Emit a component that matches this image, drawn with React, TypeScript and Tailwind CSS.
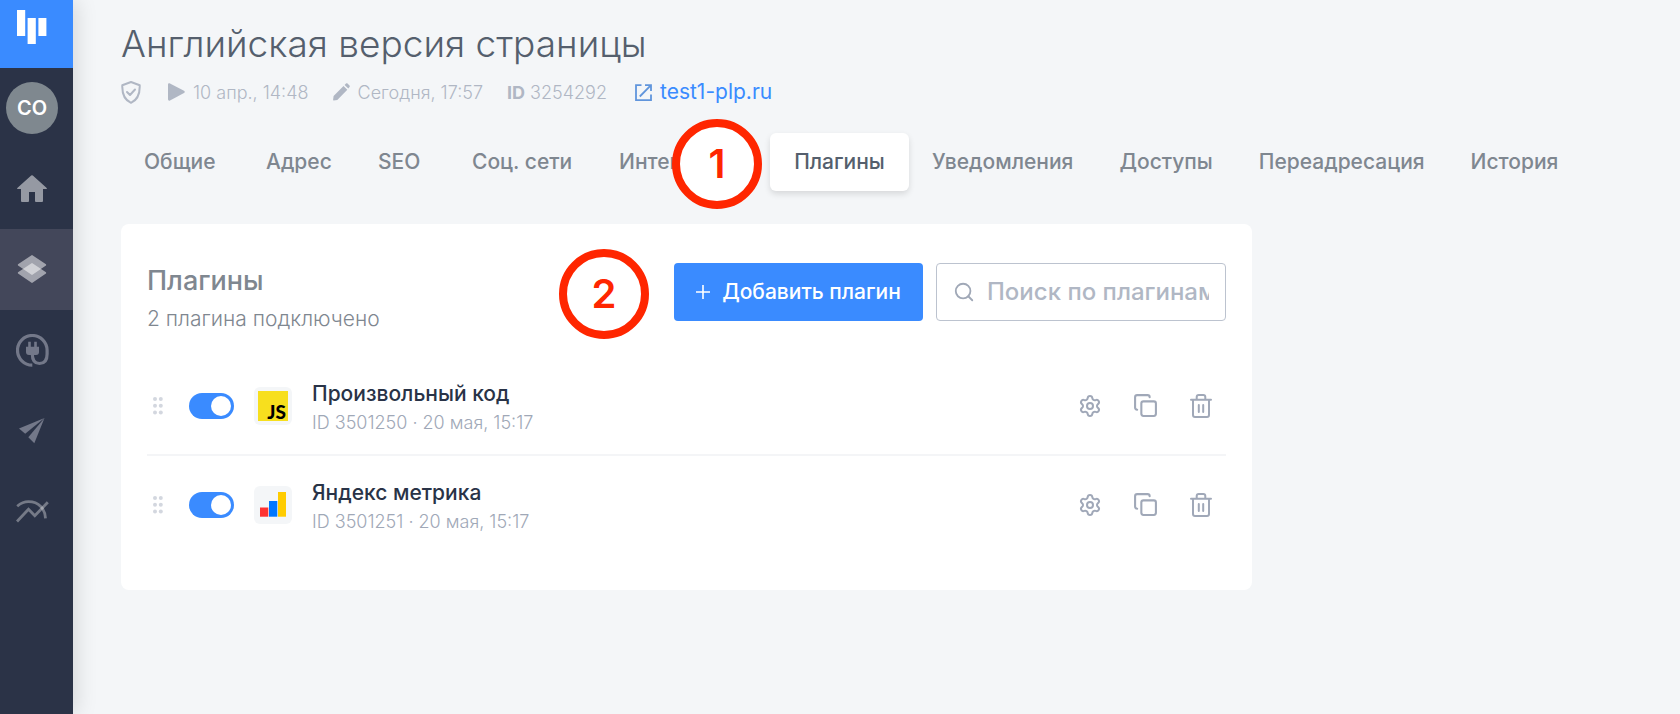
import { useState } from "react";
import type { ReactNode } from "react";
import { Copy, Search, Settings } from "lucide-react";

function LogoIcon() {
  return (
    <svg width="30" height="34" viewBox="0 0 30 34" fill="#fff" aria-hidden="true">
      <rect x="0" y="0" width="8.2" height="26" />
      <rect x="10.6" y="8" width="8.2" height="26" />
      <rect x="21.4" y="8" width="8" height="18" />
    </svg>
  );
}

function HomeIcon() {
  return (
    <svg width="30" height="28" viewBox="0 0 30 28" fill="#fff" fillOpacity="0.5" aria-hidden="true">
      <path d="M14.2.6a1.2 1.2 0 0 1 1.6 0L29.7 13c.5.5.3 1-.4 1H26v12a1 1 0 0 1-1 1h-6a1 1 0 0 1-1-1v-9h-6v9a1 1 0 0 1-1 1H5a1 1 0 0 1-1-1V14H.7c-.7 0-.9-.5-.4-1z" />
    </svg>
  );
}

function LayersIcon() {
  return (
    <svg width="30" height="29" viewBox="0 0 30 29" fill="#fff" fillOpacity="0.5" aria-hidden="true">
      <path d="M14.2.4a1.4 1.4 0 0 1 1.6 0L28.6 9a1 1 0 0 1 0 1.8L15.8 19.6a1.4 1.4 0 0 1-1.6 0L1.4 10.8a1 1 0 0 1 0-1.8z" />
      <path d="M14.2 8.4a1.4 1.4 0 0 1 1.6 0L28.6 17a1 1 0 0 1 0 1.8L15.8 27.6a1.4 1.4 0 0 1-1.6 0L1.4 18.8a1 1 0 0 1 0-1.8z" />
    </svg>
  );
}

function PlugIcon() {
  return (
    <svg width="33" height="33" viewBox="0 0 33 33" fill="none" stroke="#737889" strokeWidth="3.2" aria-hidden="true">
      <path d="M16.3 31.1A14.8 14.8 0 1 1 31.1 16.3V20C31.1 26 28.5 29.5 23.5 29.5S16.3 26 16.3 20" />
      <path d="M13.5 7.7v6M19.5 7.7v6" strokeWidth="2.6" />
      <path d="M10 12.7h13v5.3a3 3 0 0 1-3 3h-7a3 3 0 0 1-3-3z" fill="#737889" stroke="none" />
    </svg>
  );
}

function PlaneIcon() {
  return (
    <svg width="26" height="28" viewBox="0 0 26 28" fill="#737889" aria-hidden="true">
      <path d="M25.5 0 0 10.6l6.2 5.2z" />
      <path d="M25.5 0 9.3 19.2 15.3 25.3z" />
    </svg>
  );
}

function TrendsIcon() {
  return (
    <svg width="33" height="25" viewBox="0 0 33 25" fill="none" stroke="#fff" strokeOpacity="0.35" strokeWidth="2.8" aria-hidden="true">
      <path d="M1 21.5 12.5 9.2l6.3 6.6L31.8 2.2" />
      <path d="M1.2 6.2C5 3 8.5 1.7 12.5 1.7 23 1.7 29 9 29.5 18.3" />
    </svg>
  );
}

function ShieldIcon() {
  return (
    <svg width="20" height="23" viewBox="0 0 20 23" fill="none" stroke="#b0b7c4" strokeWidth="2" strokeLinecap="round" strokeLinejoin="round" aria-hidden="true">
      <path d="M10 1 1.3 4.2C1 12 2.5 18.5 10 21.8 17.5 18.5 19 12 18.7 4.2z" />
      <path d="m6 11 3 3 5-5.5" />
    </svg>
  );
}

function PlayIcon() {
  return (
    <svg width="17" height="18" viewBox="0 0 17 18" fill="#b0b7c4" aria-hidden="true">
      <path d="M0 1.5C0 .3 1 0 2 .4l14 7.3c1 .6 1 1.8 0 2.4L2 17.5c-1 .5-2 0-2-1.2z" />
    </svg>
  );
}

function PencilIcon() {
  return (
    <svg width="17" height="18" viewBox="0 0 17 18" fill="#b0b7c4" aria-hidden="true">
      <path d="M10.5 3 14.3 6.8 4.3 16.9.7 17.5c-.5 0-.7-.2-.6-.7l.5-3.8zM11.6 1.9l1.4-1.4c.5-.5 1-.5 1.5 0l2 2c.5.5.5 1 0 1.5l-1.2 1.5z" />
    </svg>
  );
}

function OpenIcon() {
  return (
    <svg width="17" height="17" viewBox="0 0 17 17" fill="none" stroke="#6095dc" strokeWidth="1.8" aria-hidden="true">
      <path d="M6.5 1.2H1v15h15V10.500" />
      <path d="M10 1.2h6V7M16 1.2 4.8 12.5" />
    </svg>
  );
}

function TrashIcon() {
  return (
    <svg width="24" height="24" viewBox="0 0 24 24" fill="none" stroke="currentColor" strokeWidth="2" strokeLinecap="round" strokeLinejoin="round" aria-hidden="true">
      <path d="M2 5.7h20M7.7 5.7V3a2 2 0 0 1 2-2h4.600a2 2 0 0 1 2 2v2.700M4 5.700V21a2 2 0 0 0 2 2h12a2 2 0 0 0 2-2V5.700" />
      <path d="M9.800 11v7M14.200 11v7" />
    </svg>
  );
}

function DragDots() {
  return (
    <svg width="10" height="18" viewBox="0 0 10 18" fill="#d3d7df" aria-hidden="true">
      {[2, 8.7, 15.4].map((y) => (
        <g key={y}>
          <circle cx="2" cy={y} r="2" />
          <circle cx="7.8" cy={y} r="2" />
        </g>
      ))}
    </svg>
  );
}

function JsIcon() {
  return (
    <span className="flex h-[30px] w-[30px] items-end justify-end bg-[#f7df1e] pr-[2px] font-['Lato',sans-serif] text-[19px] leading-[19px] font-black text-black">
      JS
    </span>
  );
}

function MetrikaIcon() {
  return (
    <svg width="26" height="25" viewBox="0 0 26 25" aria-hidden="true">
      <rect x="0" y="15.5" width="8.3" height="9.2" fill="#ff3333" />
      <rect x="9" y="9" width="8.3" height="15.7" fill="#0077ff" />
      <rect x="18" y="0" width="8" height="24.7" fill="#ffcc00" />
    </svg>
  );
}

function Badge({ children, className }: { children: string; className: string }) {
  return (
    <span
      className={`pointer-events-none absolute z-10 flex h-[90px] w-[90px] items-center justify-center rounded-full border-8 border-[#ff2600] bg-white text-[40px] leading-none font-semibold text-[#ff2600] ${className}`}
    >
      {children}
    </span>
  );
}

function NavItem({ label, active, children }: { label: string; active?: boolean; children: ReactNode }) {
  return (
    <a
      href="#"
      aria-label={label}
      className={`flex h-[81px] items-center justify-center pr-[9px] ${active ? "bg-[#43475a]" : ""}`}
    >
      {children}
    </a>
  );
}

function Sidebar() {
  return (
    <aside className="flex w-[73px] shrink-0 flex-col bg-[#2b3347] shadow-[4px_0_20px_rgba(0,0,0,0.12)]">
      <a href="#" aria-label="Главная" className="flex h-17 items-start justify-center bg-[#3a8bff] pt-[10px] pr-[9px]">
        <LogoIcon />
      </a>
      <a href="#" className="flex h-20 items-center justify-center pr-[9px]">
        <span className="flex h-[52px] w-[52px] items-center justify-center rounded-full bg-[#7f888f] text-[20px] font-semibold text-white">
          CO
        </span>
      </a>
      <nav aria-label="Разделы">
        <NavItem label="Дом"><HomeIcon /></NavItem>
        <NavItem label="Страницы" active><LayersIcon /></NavItem>
        <NavItem label="Подключения"><PlugIcon /></NavItem>
        <NavItem label="Рассылки"><PlaneIcon /></NavItem>
        <NavItem label="Статистика"><TrendsIcon /></NavItem>
      </nav>
    </aside>
  );
}

const tabs = [
  { label: "Общие", width: "min-w-[122px]" },
  { label: "Адрес", width: "min-w-[112px]" },
  { label: "SEO", width: "min-w-[94px]" },
  { label: "Соц. сети", width: "min-w-[147px]" },
  { label: "Интеграции", width: "min-w-[174px]" },
  { label: "Плагины", width: "min-w-[139px]" },
  { label: "Уведомления", width: "" },
  { label: "Доступы", width: "" },
  { label: "Переадресация", width: "" },
  { label: "История", width: "" },
];

function Tabs() {
  return (
    <nav aria-label="Настройки страницы" className="mt-[27px] flex text-[21px] leading-[58px] font-medium whitespace-nowrap text-[#7f8790]">
      {tabs.map(({ label, width }) =>
        label === "Плагины" ? (
          <a key={label} href="#" aria-current="page" className={`relative rounded-md bg-white px-[23px] text-center text-[#555f6d] shadow-[0_3px_6px_rgba(0,0,0,0.12)] ${width}`}>
            {label}
            <Badge className="-top-[14px] -left-[98px]">1</Badge>
          </a>
        ) : (
          <a key={label} href="#" className={`px-[23px] ${width}`}>
            {label}
          </a>
        ),
      )}
    </nav>
  );
}

function PluginRow({ name, info, icon }: { name: string; info: string; icon: ReactNode }) {
  const [enabled, setEnabled] = useState(true);
  return (
    <li className="flex h-[99px] items-center border-b-2 border-[#f4f5f7] last:border-transparent">
      <button type="button" aria-label="Переместить" className="ml-[6px] cursor-grab">
        <DragDots />
      </button>
      <label className="relative ml-[26px] flex h-[26px] w-[45px] cursor-pointer">
        <input
          type="checkbox"
          aria-label={name}
          checked={enabled}
          onChange={(event) => setEnabled(event.target.checked)}
          className="peer h-full w-full cursor-pointer appearance-none rounded-full bg-[#c5cad4] checked:bg-[#3a8bff]"
        />
        <span className="pointer-events-none absolute top-[3px] left-[3px] h-5 w-5 rounded-full bg-white peer-checked:left-[22px]" />
      </label>
      <span className="ml-5 flex h-[38px] w-[38px] items-center justify-center rounded-md bg-[#f4f6f8]">{icon}</span>
      <div className="ml-5 flex-1 pt-[6px]">
        <h3 className="text-[21px] leading-7 font-medium text-[#293347]">{name}</h3>
        <p className="text-[18px] leading-[30px] font-light text-[#a0a8b7]">{info}</p>
      </div>
      <div className="flex gap-[31px] pr-[13px] text-[#a0a8b8]">
        <button type="button" aria-label="Настройки"><Settings size={24} strokeWidth={2} /></button>
        <button type="button" aria-label="Копировать"><Copy size={25} strokeWidth={2} /></button>
        <button type="button" aria-label="Удалить"><TrashIcon /></button>
      </div>
    </li>
  );
}

export default function App() {
  return (
    <div className="flex min-h-screen bg-[#f4f6f8] font-['Inter','Noto_Sans',sans-serif]">
      <Sidebar />
      <main className="min-w-0 flex-1 pt-5 pr-12 pb-12 pl-12">
        <h1 className="text-[37px] leading-12 font-light text-[#555f6d]">Английская версия страницы</h1>
        <div className="mt-[10px] flex h-7 items-center whitespace-nowrap text-[18px] font-light text-[#b0b7c4]">
          <ShieldIcon />
          <span className="ml-[27px] flex items-center gap-2"><PlayIcon />10 апр., 14:48</span>
          <span className="ml-6 flex items-center gap-2"><PencilIcon />Сегодня, 17:57</span>
          <span className="ml-6"><b className="font-bold">ID</b> 3254292</span>
          <a href="#" className="ml-7 flex items-center gap-2 text-[21px] font-normal text-[#3a8bff]"><OpenIcon />test1-plp.ru</a>
        </div>
        <Tabs />
        <section className="mt-[33px] max-w-[1131px] rounded-lg bg-white px-[26px] pt-[39px] pb-[35px]">
          <header className="flex justify-between">
            <div>
              <h2 className="text-[27px] leading-9 font-medium text-[#7f8790]">Плагины</h2>
              <p className="mt-1 text-[21px] leading-8 font-light text-[#7f8790]">2 плагина подключено</p>
            </div>
            <div className="flex items-start gap-[13px]">
              <button type="button" className="relative flex h-[58px] w-[249px] items-center justify-center gap-3 rounded bg-[#3a8bff] text-[21px] font-medium whitespace-nowrap text-white">
                <svg width="14" height="14" viewBox="0 0 14 14" stroke="#fff" strokeWidth="1.6" aria-hidden="true">
                  <path d="M7 0v14M0 7h14" />
                </svg>
                Добавить плагин
                <Badge className="-top-[14px] -left-[115px]">2</Badge>
              </button>
              <label className="flex h-[58px] w-[290px] items-center rounded border border-[#bcc3cf] px-4 text-[#a0a8b7]">
                <Search size={22} strokeWidth={2} className="shrink-0" />
                <input
                  type="text"
                  aria-label="Поиск по плагинам"
                  placeholder="Поиск по плагинам"
                  className="ml-3 w-full min-w-0 bg-transparent text-[24px] font-medium text-[#555f6d] outline-none placeholder:text-[#b0b7c4]"
                />
              </label>
            </div>
          </header>
          <ul className="mt-[22px]">
            <PluginRow name="Произвольный код" info="ID 3501250 · 20 мая, 15:17" icon={<JsIcon />} />
            <PluginRow name="Яндекс метрика" info="ID 3501251 · 20 мая, 15:17" icon={<MetrikaIcon />} />
          </ul>
        </section>
      </main>
    </div>
  );
}
